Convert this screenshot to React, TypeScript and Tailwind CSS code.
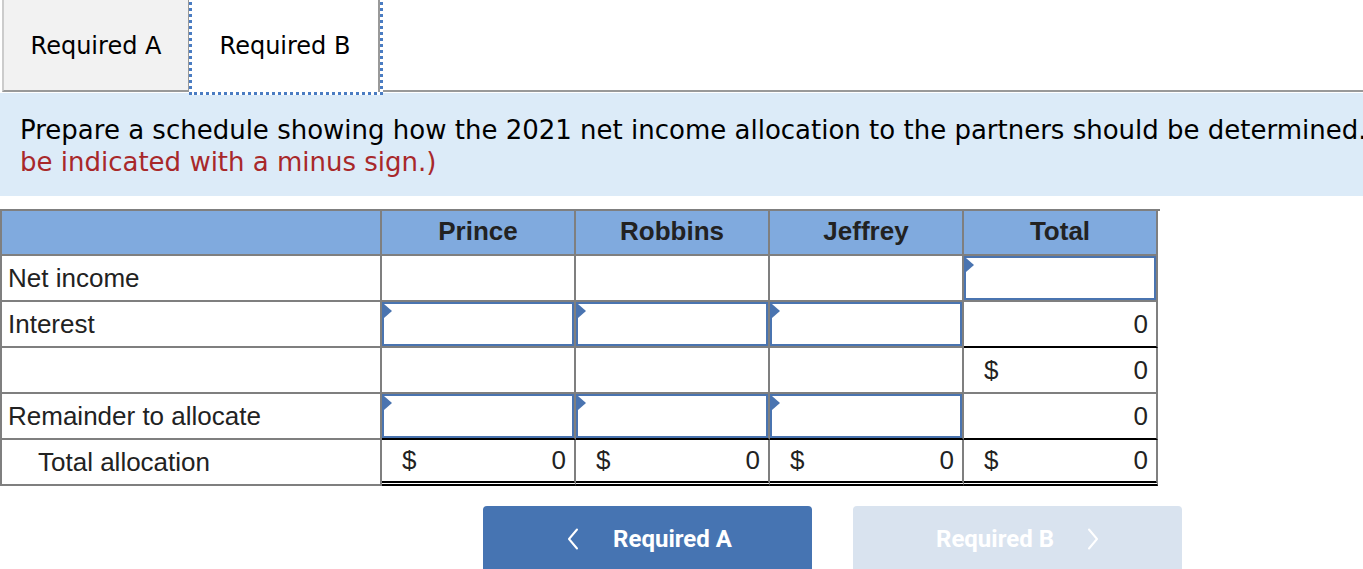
import React from "react";

function InputBox() {
  return (
    <div className="relative h-full w-full border-2 border-[#4a74b0] bg-white">
      <div className="absolute left-0 top-0 h-0 w-0 border-y-[7px] border-l-[8px] border-y-transparent border-l-[#4a74b0]" />
    </div>
  );
}

function Money({ dollar }: { dollar?: boolean }) {
  return (
    <div className="flex h-full w-full items-center justify-between pl-[20px] pr-[8px]">
      <span>{dollar ? "$" : ""}</span>
      <span>0</span>
    </div>
  );
}

function ChevronL() {
  return (
    <svg width="12" height="22" viewBox="0 0 12 22" fill="none">
      <polyline points="10,1.5 2,11 10,20.5" stroke="white" strokeWidth="2" strokeLinecap="round" strokeLinejoin="round" />
    </svg>
  );
}

function ChevronR() {
  return (
    <svg width="12" height="22" viewBox="0 0 12 22" fill="none">
      <polyline points="2,1.5 10,11 2,20.5" stroke="white" strokeWidth="2" strokeLinecap="round" strokeLinejoin="round" />
    </svg>
  );
}

export default function App() {
  const cell = "h-[46px] border-b-2 border-r-2 border-[#7f7f7f]";
  return (
    <div className="relative h-[569px] w-[1363px] overflow-hidden bg-white">
      {/* Tabs */}
      <div className="flex h-[93px] items-start font-['DejaVu_Sans',sans-serif] text-[24px] text-black">
        <div className="ml-[2px] flex h-[92px] w-[188px] items-center justify-center border-b-2 border-l-2 border-r-2 border-b-[#999999] border-l-[#cccccc] border-r-[#999999] bg-[#f2f2f2] pt-[1px]">
          Required A
        </div>
        <div className="relative z-10 -ml-[1px] -mt-[3px] h-[98px] w-[194px] border-[3px] border-dotted border-[#4a7cc2] bg-white">
          <div className="flex h-full w-full items-center justify-center border-r-2 border-[#999999]">
            Required B
          </div>
        </div>
        <div className="h-[92px] flex-1 border-b-2 border-[#999999]" />
      </div>

      {/* Instructions */}
      <div className="h-[103px] bg-[#dcebf8] pl-[20px] pt-[21px] font-['DejaVu_Sans',sans-serif] text-[26px] leading-[32px]">
        <div className="whitespace-nowrap text-black">
          Prepare a schedule showing how the 2021 net income allocation to the partners should be determined.
        </div>
        <div className="whitespace-nowrap text-[#a8282a]">be indicated with a minus sign.)</div>
      </div>

      {/* Table */}
      <div className="mt-[13px] grid w-[1160px] grid-cols-[380px_194px_194px_194px_194px] border-l-2 border-t-2 border-[#7f7f7f] font-['Liberation_Sans',Arial,sans-serif] text-[26px] text-[#222222]">
        {/* header */}
        <div className="h-[45px] border-b-2 border-r-2 border-[#7f7f7f] bg-[#80aade]" />
        {["Prince", "Robbins", "Jeffrey", "Total"].map((h) => (
          <div
            key={h}
            className="flex h-[45px] items-center justify-center border-b-2 border-r-2 border-[#7f7f7f] bg-[#80aade] pb-[2px] font-bold"
          >
            {h}
          </div>
        ))}

        {/* Net income */}
        <div className={`${cell} flex items-center pl-[6px]`}>Net income</div>
        <div className={cell} />
        <div className={cell} />
        <div className={cell} />
        <div className={cell}>
          <InputBox />
        </div>

        {/* Interest */}
        <div className={`${cell} flex items-center pl-[6px]`}>Interest</div>
        <div className={cell}>
          <InputBox />
        </div>
        <div className={cell}>
          <InputBox />
        </div>
        <div className={cell}>
          <InputBox />
        </div>
        <div className="h-[46px] border-b-2 border-r-2 border-b-black border-r-[#7f7f7f]">
          <Money />
        </div>

        {/* blank */}
        <div className={cell} />
        <div className={cell} />
        <div className={cell} />
        <div className={cell} />
        <div className={cell}>
          <Money dollar />
        </div>

        {/* Remainder */}
        <div className={`${cell} flex items-center pl-[6px]`}>Remainder to allocate</div>
        {[0, 1, 2].map((i) => (
          <div key={i} className="h-[46px] border-b-2 border-r-2 border-b-black border-r-[#7f7f7f]">
            <InputBox />
          </div>
        ))}
        <div className="h-[46px] border-b-2 border-r-2 border-b-black border-r-[#7f7f7f]">
          <Money />
        </div>

        {/* Total allocation */}
        <div className={`${cell} flex items-center pl-[36px]`}>Total allocation</div>
        {[0, 1, 2, 3].map((i) => (
          <div key={i} className="h-[46px] border-b-[5px] border-r-2 border-b-black border-r-[#7f7f7f] [border-bottom-style:double]">
            <Money dollar />
          </div>
        ))}
      </div>

      {/* Buttons */}
      <div className="ml-[483px] mt-[20px] flex gap-[41px] font-['Roboto',sans-serif] text-[24px] font-bold text-white">
        <div className="flex h-[66px] w-[329px] items-center justify-center gap-[34px] rounded-t-[4px] bg-[#4674b2] pl-[4px]">
          <ChevronL />
          <span>Required A</span>
        </div>
        <div className="flex h-[66px] w-[329px] items-center justify-center gap-[33px] rounded-t-[4px] bg-[#d9e3ef]">
          <span>Required B</span>
          <ChevronR />
        </div>
      </div>
    </div>
  );
}
